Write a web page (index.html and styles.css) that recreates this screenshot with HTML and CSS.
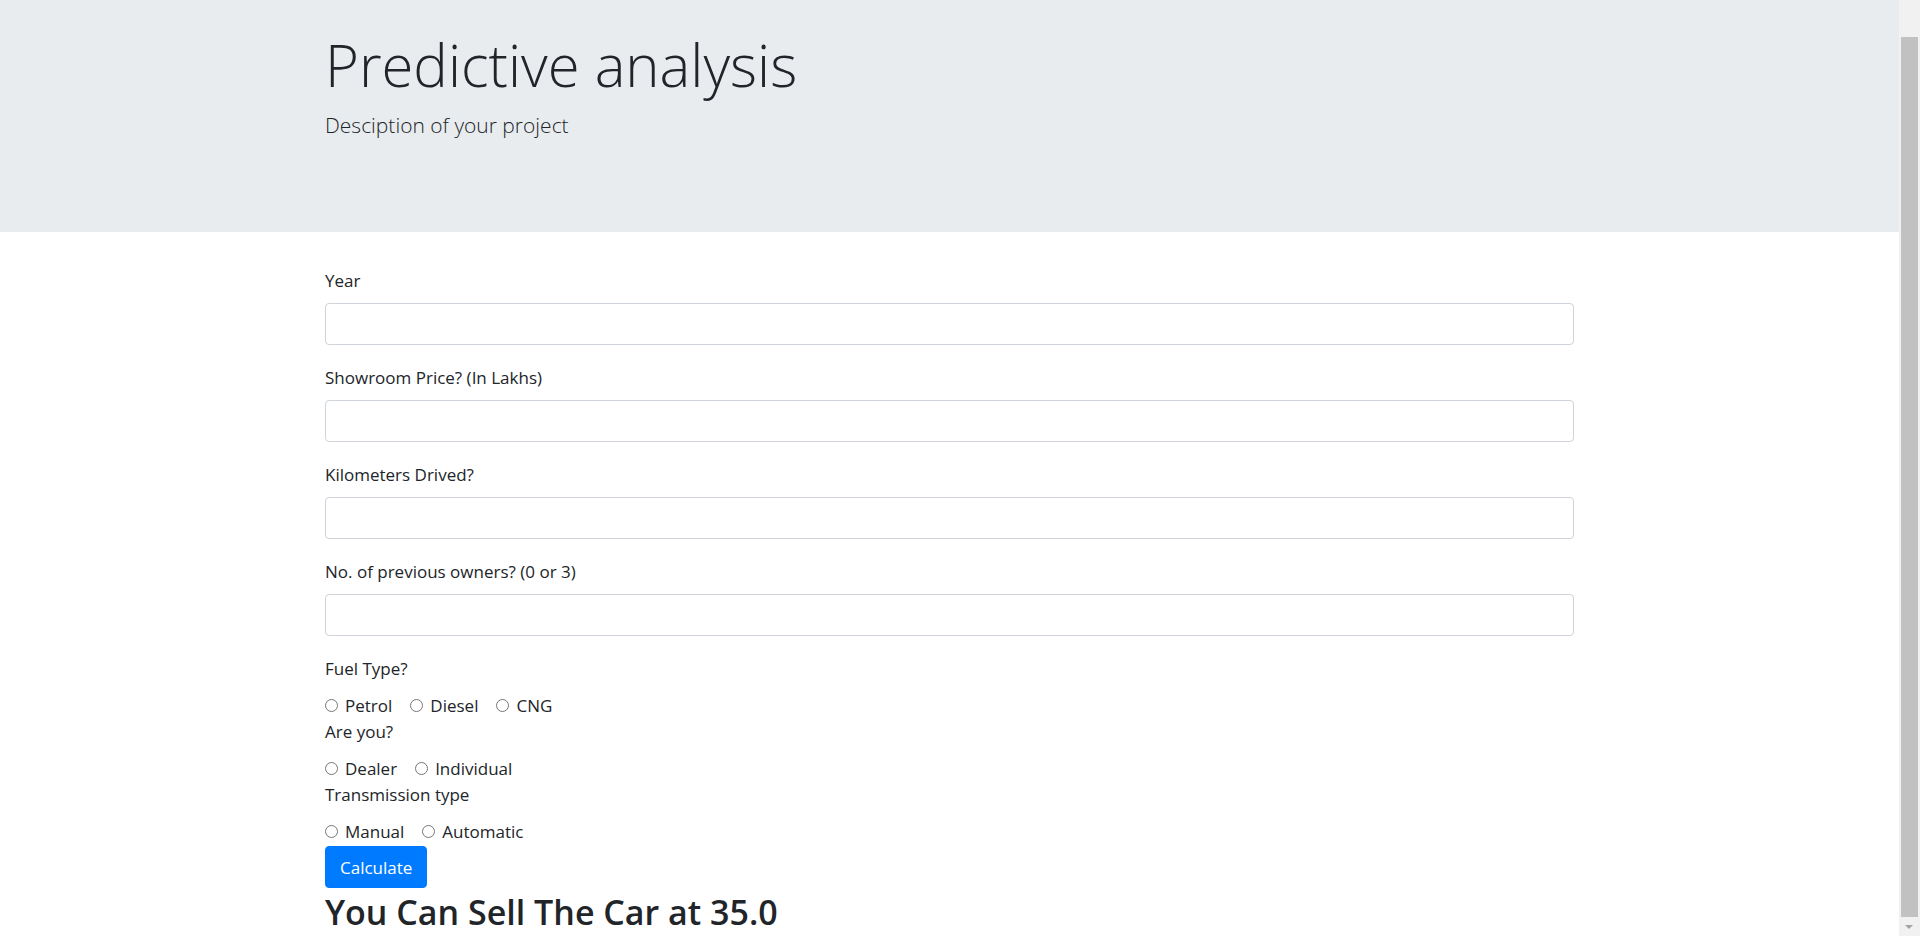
FILE: index.html
```html
<!DOCTYPE html>
<html lang="en">
<head>
<meta charset="utf-8">
<title>Predictive analysis</title>
<link rel="stylesheet" href="styles.css">
</head>
<body>
<div class="page">
  <header class="jumbotron">
    <div class="container">
      <h1 class="display">Predictive analysis</h1>
      <p class="lead">Desciption of your project</p>
    </div>
  </header>
  <main class="container">
    <form class="form">
      <div class="form-group">
        <label class="label">Year</label>
        <input class="input" type="text">
      </div>
      <div class="form-group">
        <label class="label">Showroom Price? (In Lakhs)</label>
        <input class="input" type="text">
      </div>
      <div class="form-group">
        <label class="label">Kilometers Drived?</label>
        <input class="input" type="text">
      </div>
      <div class="form-group">
        <label class="label">No. of previous owners? (0 or 3)</label>
        <input class="input" type="text">
      </div>
      <label class="label">Fuel Type?</label>
      <div class="radio-row">
        <label class="radio"><input type="radio" name="fuel"><span>Petrol</span></label>
        <label class="radio"><input type="radio" name="fuel"><span>Diesel</span></label>
        <label class="radio"><input type="radio" name="fuel"><span>CNG</span></label>
      </div>
      <label class="label">Are you?</label>
      <div class="radio-row">
        <label class="radio"><input type="radio" name="seller"><span>Dealer</span></label>
        <label class="radio"><input type="radio" name="seller"><span>Individual</span></label>
      </div>
      <label class="label">Transmission type</label>
      <div class="radio-row">
        <label class="radio"><input type="radio" name="trans"><span>Manual</span></label>
        <label class="radio"><input type="radio" name="trans"><span>Automatic</span></label>
      </div>
      <button class="btn" type="button">Calculate</button>
    </form>
    <h2 class="result">You Can Sell The Car at 35.0</h2>
  </main>
</div>
<div class="scrollbar"><div class="thumb"></div><div class="arrow-down"></div></div>
</body>
</html>
```
FILE: styles.css
```css
html, body {
  margin: 0;
  padding: 0;
}
body {
  font-family: "Open Sans", "Noto Sans", sans-serif;
  color: #212529;
  background: #fff;
  overflow: hidden;
}
.page {
  margin-right: 21px;
}
.container {
  width: 1249px;
  margin: 0 auto;
}
.jumbotron {
  background: #e9ecef;
  height: 232px;
  box-sizing: border-box;
  padding-top: 30px;
  margin-bottom: 36px;
}
.display {
  margin: 0;
  font-size: 58px;
  font-weight: 300;
  line-height: 70px;
}
.lead {
  margin: 10px 0 0;
  font-size: 21px;
  font-weight: 300;
  line-height: 30px;
}
.form {
  display: flex;
  flex-direction: column;
  align-items: flex-start;
}
.form-group {
  width: 100%;
  margin-bottom: 20px;
}
.label {
  display: block;
  font-size: 17px;
  line-height: 26px;
  margin-bottom: 9px;
}
.input {
  display: block;
  width: 100%;
  height: 42px;
  box-sizing: border-box;
  border: 1px solid #ced4da;
  border-radius: 4px;
  background: #fff;
  margin: 0;
}
.radio-row {
  display: flex;
  align-items: center;
  height: 28px;
  font-size: 17px;
}
.radio {
  display: flex;
  align-items: center;
  margin-right: 18px;
}
.radio input {
  appearance: none;
  -webkit-appearance: none;
  width: 13px;
  height: 13px;
  border: 1px solid #767676;
  border-radius: 50%;
  margin: 0 7px 0 0;
  box-sizing: border-box;
  background: #fff;
}
.btn {
  margin-top: 1px;
  height: 42px;
  padding: 0 14px;
  background: #007bff;
  color: #fff;
  border: 1px solid #007bff;
  border-radius: 4px;
  font-family: inherit;
  font-size: 17px;
}
.result {
  margin: 4px 0 0;
  font-size: 34px;
  font-weight: 600;
  line-height: 40px;
}
.scrollbar {
  position: fixed;
  top: 0;
  right: 0;
  width: 21px;
  height: 100%;
  background: #f1f1f1;
}
.thumb {
  position: absolute;
  left: 2px;
  right: 2px;
  top: 37px;
  bottom: 19px;
  background: #c1c1c1;
}
.arrow-down {
  position: absolute;
  left: 6px;
  bottom: 7px;
  width: 0;
  height: 0;
  border-left: 4px solid transparent;
  border-right: 4px solid transparent;
  border-top: 4px solid #a3a3a3;
}
```
